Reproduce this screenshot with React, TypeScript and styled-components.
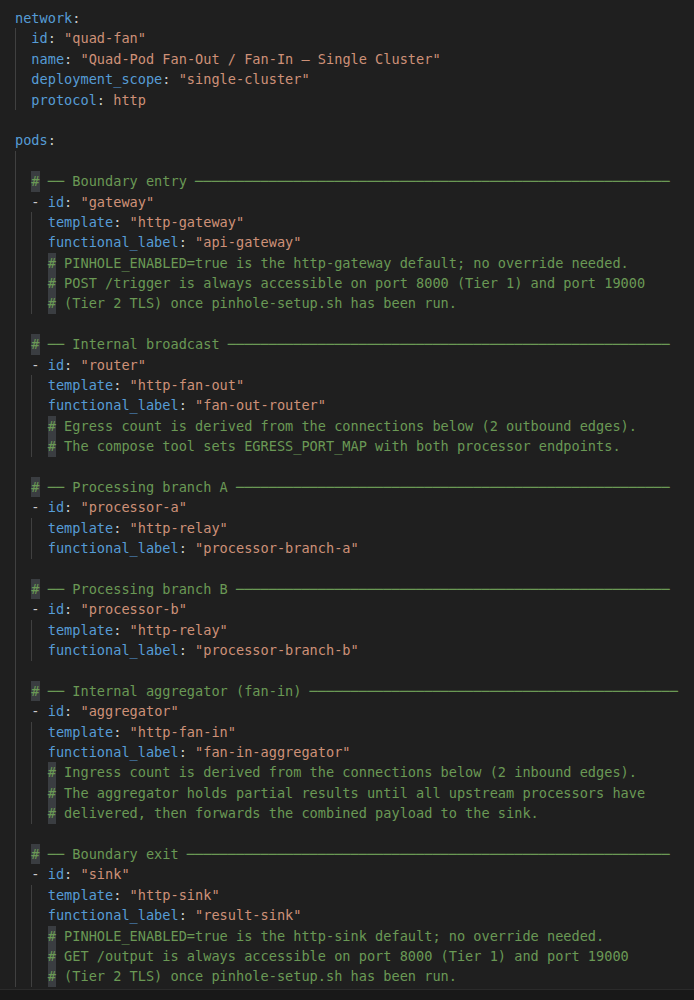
import React from "react";
import styled, { createGlobalStyle } from "styled-components";

const Global = createGlobalStyle`
  html, body {
    margin: 0;
    padding: 0;
    background: #1f1f1f;
  }
  #root {
    width: 694px;
    height: 1000px;
    overflow: hidden;
  }
`;

const Window = styled.div`
  display: flex;
  flex-direction: column;
  width: 694px;
  height: 1000px;
  background: #1f1f1f;
`;

const Editor = styled.div`
  flex: 0 0 989px;
  box-sizing: border-box;
  padding: 8px 0 0 15px;
  overflow: hidden;
  font-family: "DejaVu Sans Mono", "Liberation Mono", monospace;
  font-size: 13.6px;
`;

const Panel = styled.div`
  flex: 1 1 auto;
  background: #181818;
  border-top: 1px solid #2b2b2b;
`;

const Line = styled.div`
  display: flex;
  align-items: stretch;
  height: 20.4px;
  line-height: 20.4px;
  white-space: pre;
`;

const Guide = styled.span`
  flex: 0 0 auto;
  width: 2ch;
  box-sizing: border-box;
  border-left: 1px solid #404040;
`;

type Kind = "key" | "str" | "punc" | "comment" | "hash";

const colors: Record<Kind, string> = {
  key: "#569cd6",
  str: "#ce9178",
  punc: "#cccccc",
  comment: "#6a9955",
  hash: "#6a9955",
};

const Tok = styled.span<{ $kind: Kind }>`
  flex: 0 0 auto;
  color: ${(p) => colors[p.$kind]};
  background: ${(p) => (p.$kind === "hash" ? "#3a3d41" : "transparent")};
`;

type Token = [Kind, string];
type LineSpec = { g: number; t: Token[] };

const kv = (g: number, key: string, value: string): LineSpec => ({
  g,
  t: [
    ["key", key],
    ["punc", ": "],
    ["str", value],
  ],
});

const item = (value: string): LineSpec => ({
  g: 1,
  t: [
    ["punc", "- "],
    ["key", "id"],
    ["punc", ": "],
    ["str", `"${value}"`],
  ],
});

const comment = (g: number, text: string): LineSpec => ({
  g,
  t: [
    ["hash", "#"],
    ["comment", " " + text],
  ],
});

const header = (label: string, total = 80): LineSpec => {
  const used = 2 + 5 + label.length + 1;
  return {
    g: 1,
    t: [
      ["hash", "#"],
      ["comment", " \u2500\u2500 " + label + " " + "\u2500".repeat(total - used)],
    ],
  };
};

const blank = (g: number): LineSpec => ({ g, t: [] });

const lines: LineSpec[] = [
  { g: 0, t: [["key", "network"], ["punc", ":"]] },
  kv(1, "id", '"quad-fan"'),
  kv(1, "name", '"Quad-Pod Fan-Out / Fan-In \u2014 Single Cluster"'),
  kv(1, "deployment_scope", '"single-cluster"'),
  kv(1, "protocol", "http"),
  blank(0),
  { g: 0, t: [["key", "pods"], ["punc", ":"]] },
  blank(1),
  header("Boundary entry"),
  item("gateway"),
  kv(2, "template", '"http-gateway"'),
  kv(2, "functional_label", '"api-gateway"'),
  comment(2, "PINHOLE_ENABLED=true is the http-gateway default; no override needed."),
  comment(2, "POST /trigger is always accessible on port 8000 (Tier 1) and port 19000"),
  comment(2, "(Tier 2 TLS) once pinhole-setup.sh has been run."),
  blank(1),
  header("Internal broadcast"),
  item("router"),
  kv(2, "template", '"http-fan-out"'),
  kv(2, "functional_label", '"fan-out-router"'),
  comment(2, "Egress count is derived from the connections below (2 outbound edges)."),
  comment(2, "The compose tool sets EGRESS_PORT_MAP with both processor endpoints."),
  blank(1),
  header("Processing branch A"),
  item("processor-a"),
  kv(2, "template", '"http-relay"'),
  kv(2, "functional_label", '"processor-branch-a"'),
  blank(1),
  header("Processing branch B"),
  item("processor-b"),
  kv(2, "template", '"http-relay"'),
  kv(2, "functional_label", '"processor-branch-b"'),
  blank(1),
  header("Internal aggregator (fan-in)", 81),
  item("aggregator"),
  kv(2, "template", '"http-fan-in"'),
  kv(2, "functional_label", '"fan-in-aggregator"'),
  comment(2, "Ingress count is derived from the connections below (2 inbound edges)."),
  comment(2, "The aggregator holds partial results until all upstream processors have"),
  comment(2, "delivered, then forwards the combined payload to the sink."),
  blank(1),
  header("Boundary exit"),
  item("sink"),
  kv(2, "template", '"http-sink"'),
  kv(2, "functional_label", '"result-sink"'),
  comment(2, "PINHOLE_ENABLED=true is the http-sink default; no override needed."),
  comment(2, "GET /output is always accessible on port 8000 (Tier 1) and port 19000"),
  comment(2, "(Tier 2 TLS) once pinhole-setup.sh has been run."),
];

export default function App() {
  return (
    <>
      <Global />
      <Window>
        <Editor>
          {lines.map((l, i) => (
            <Line key={i}>
              {Array.from({ length: l.g }).map((_, j) => (
                <Guide key={j} />
              ))}
              {l.t.map(([k, s], j) => (
                <Tok key={j} $kind={k}>
                  {s}
                </Tok>
              ))}
            </Line>
          ))}
        </Editor>
        <Panel />
      </Window>
    </>
  );
}
